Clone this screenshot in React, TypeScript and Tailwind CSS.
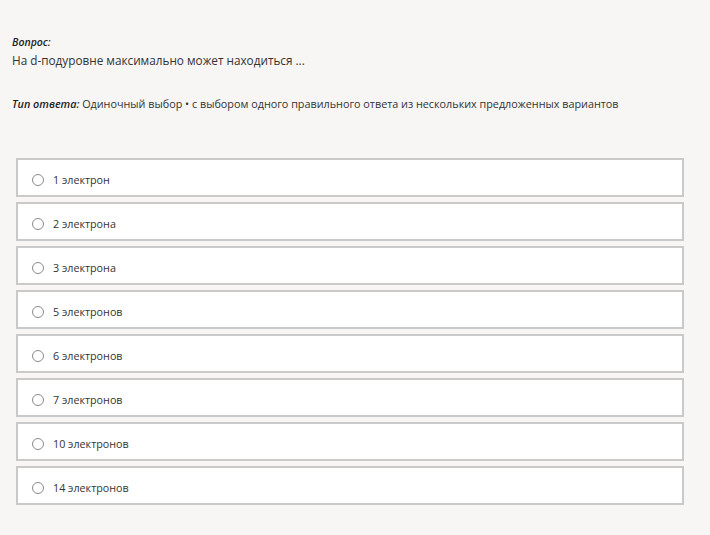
const options = [
  '1 электрон',
  '2 электрона',
  '3 электрона',
  '5 электронов',
  '6 электронов',
  '7 электронов',
  '10 электронов',
  '14 электронов',
];

export default function App() {
  return (
    <div className="min-h-[535px] w-[710px] bg-[#f7f6f4] text-[#333] font-['Open_Sans',sans-serif]">
      <div className="pl-[12px] pt-[35px]">
        <div className="text-[10.5px] italic font-semibold leading-[14px] text-[#222]">Вопрос:</div>
        <div className="mt-[3px] text-[11.75px] leading-[16px] text-[#333]">
          На d-подуровне максимально может находиться ...
        </div>
        <div className="mt-[29px] text-[10.8px] leading-[14px] text-[#333]">
          <span className="italic font-semibold text-[#222]">Тип ответа:</span> Одиночный выбор • с выбором одного правильного ответа из нескольких предложенных вариантов
        </div>
      </div>

      <div className="mt-[47px] ml-[16px] w-[668px] flex flex-col gap-[5px]">
        {options.map((opt) => (
          <label
            key={opt}
            className="flex items-center h-[39px] bg-white border-2 border-[#c9c9c9] pl-[14px] pt-[5px] cursor-pointer"
          >
            <span className="w-[12px] h-[12px] rounded-full border border-[#8a8a8a] bg-white" />
            <span className="ml-[9px] text-[10.75px] text-[#333]">{opt}</span>
          </label>
        ))}
      </div>
    </div>
  );
}
